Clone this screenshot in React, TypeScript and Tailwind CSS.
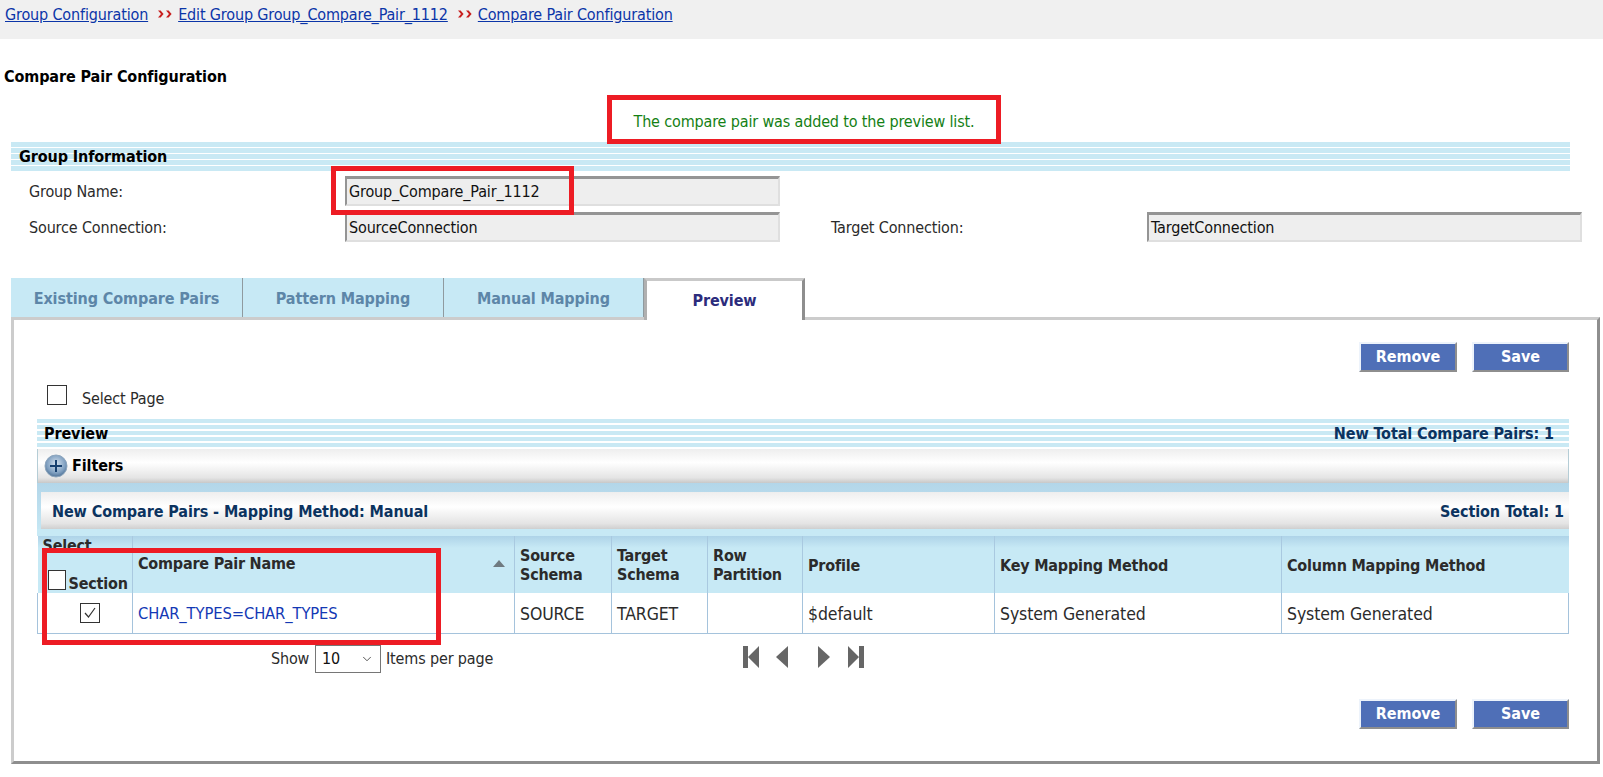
import React from 'react';
import { ChevronDown } from 'lucide-react';

const font = 'font-["DejaVu_Sans_Condensed","Noto_Sans",sans-serif] tracking-[-0.1px]';
const plain = 'text-[16px] tracking-[-0.15px]';

const Band: React.FC<{ className: string; children: React.ReactNode }> = ({ className, children }) => (
  <div className={`flex items-center justify-between bg-[repeating-linear-gradient(180deg,#c9e9f4_0px,#c9e9f4_4.5px,#ffffff_4.5px,#ffffff_6px)] ${className}`}>
    {children}
  </div>
);

const Btn: React.FC<{ label: string; width: string }> = ({ label, width }) => (
  <button className={`h-[30px] border-2 border-t-[#edf3fb] border-l-[#edf3fb] border-r-[#8e8e8e] border-b-[#8e8e8e] bg-[#4f6fb7] text-[16px] font-bold text-white ${width}`}>
    {label}
  </button>
);

const Field: React.FC<{ value: string }> = ({ value }) => (
  <div className={`flex h-[30px] w-[435px] items-center border-2 border-t-[3px] border-t-[#949494] border-l-[#949494] border-r-[#dfdfdf] border-b-[#dfdfdf] bg-[#eeeeee] pl-[2px] pt-[1px] text-[#111] ${plain}`}>
    {value}
  </div>
);

const Crumb: React.FC<{ children: React.ReactNode }> = ({ children }) => (
  <a className={`text-[#0b35a8] underline ${plain}`}>{children}</a>
);

const CrumbSep = () => (
  <svg width="15" height="10" viewBox="0 0 15 10" className="ml-[10px] mr-[5px] mt-[6px]">
    <path d="M0 1.5h2.6l3 3.5-3 3.5H0l3-3.5z" fill="#c8201f" />
    <path d="M8 1.5h2.6l3 3.5-3 3.5H8l3-3.5z" fill="#c8201f" />
  </svg>
);

const PlusIcon = () => (
  <svg width="24" height="24" viewBox="0 0 24 24" className="-ml-[1px]">
    <defs>
      <radialGradient id="plusFill" cx="50%" cy="40%" r="60%">
        <stop offset="0%" stopColor="#d6e3ef" />
        <stop offset="70%" stopColor="#7f9fc0" />
        <stop offset="100%" stopColor="#4e7196" />
      </radialGradient>
    </defs>
    <circle cx="12" cy="12" r="11" fill="url(#plusFill)" stroke="#8ea6bd" />
    <path d="M6 12h12M12 6v12" stroke="#17406f" strokeWidth="2" />
  </svg>
);

const PagerIcon: React.FC<{ d: string; w: number }> = ({ d, w }) => (
  <svg width={w} height="22" viewBox={`0 0 ${w} 22`} className="blur-[0.5px]">
    <path d={d} fill="#666" />
  </svg>
);

const headCell = 'border-r border-[#a9c9e0] px-[5px] align-middle text-left text-[16px] font-bold leading-[19px] tracking-[-0.2px] text-[#2b2b2b]';
const bodyCell = 'border-r border-b border-[#a5c3dc] px-[5px] pt-[3px] text-[17.5px] tracking-[-0.1px] text-[#2b2b2b]';

const Redbox: React.FC<{ className: string }> = ({ className }) => (
  <div className={`pointer-events-none absolute z-20 border-[5px] border-[#ed1c24] ${className}`} />
);

export default function App() {
  return (
    <div className={`relative h-[777px] w-[1603px] overflow-hidden bg-white ${font}`}>
      <div className="flex h-[39px] items-start bg-[#f0f0f0] pl-[5px] pt-[3px]">
        <Crumb>Group Configuration</Crumb>
        <CrumbSep />
        <Crumb>Edit Group Group_Compare_Pair_1112</Crumb>
        <CrumbSep />
        <Crumb>Compare Pair Configuration</Crumb>
      </div>

      <h1 className="ml-[4px] mt-[28px] h-[20px] text-[16px] font-bold leading-[20px] text-black">Compare Pair Configuration</h1>
      <p className={`mt-[25px] h-[20px] pl-[5px] text-center leading-[20px] text-[#148014] ${plain}`}>
        The compare pair was added to the preview list.
      </p>

      <Band className="ml-[11px] mt-[10px] h-[29px] w-[1559px] pl-[8px]">
        <span className="text-[16px] font-bold text-black">Group Information</span>
      </Band>

      <div className={`mt-[5px] flex flex-col gap-[6px] pl-[29px] text-[#2b2b2b] ${plain}`}>
        <div className="flex items-center">
          <span className="w-[316px] pt-[1px]">Group Name:</span>
          <Field value="Group_Compare_Pair_1112" />
        </div>
        <div className="flex items-center">
          <span className="w-[316px] pt-[2px]">Source Connection:</span>
          <Field value="SourceConnection" />
          <span className="ml-[51px] w-[316px] pt-[2px]">Target Connection:</span>
          <Field value="TargetConnection" />
        </div>
      </div>

      <div className="relative z-10 ml-[11px] mt-[33px] flex h-[42px] items-end">
        {[
          ['Existing Compare Pairs', 'w-[232px]'],
          ['Pattern Mapping', 'w-[201px]'],
          ['Manual Mapping', 'w-[200px]'],
        ].map(([label, w]) => (
          <div key={label} className={`flex h-[39px] items-center justify-center border-r border-[#8f9a9f] bg-[#c7e9f5] pt-[2px] text-[16px] font-bold text-[#5d86a8] ${w}`}>
            {label}
          </div>
        ))}
        <div className="-mb-[3px] flex h-[42px] w-[161px] items-center justify-center border-x-[3px] border-t-[3px] border-r-[#8e8e8e] border-t-[#c9c9c9] border-l-[#b0b0b0] bg-white text-[16px] font-bold text-[#2c2c7c]">
          Preview
        </div>
      </div>

      <div className="ml-[11px] flex h-[447px] w-[1589px] flex-col border-[3px] border-t-[#cccccc] border-l-[#cccccc] border-r-[#8e8e8e] border-b-[#8e8e8e] pl-[23px] pr-[28px] pt-[22px]">
        <div className="flex justify-end gap-[15px]">
          <Btn label="Remove" width="w-[98px]" />
          <Btn label="Save" width="w-[97px]" />
        </div>

        <div className={`ml-[10px] mt-[14px] flex h-[20px] items-center gap-[15px] text-[#2b2b2b] ${plain}`}>
          <div className="size-[20px] -translate-y-[1px] border border-[#333]" />
          <span className="mt-[6px]">Select Page</span>
        </div>

        <Band className="mt-[13px] h-[29px] pl-[7px] pr-[15px] text-[16px] font-bold">
          <span className="text-black">Preview</span>
          <span className="text-[#0b335f]">New Total Compare Pairs: 1</span>
        </Band>

        <div className="mt-[1px] flex h-[34px] items-center gap-[4px] border-x border-[#b5cdd6] bg-[linear-gradient(180deg,#eeeeee_0%,#ffffff_40%,#e4e4e4_85%,#c8c8c8_100%)] pl-[7px] text-[16px] font-bold text-black">
          <PlusIcon />
          <span>Filters</span>
        </div>

        <div className="bg-[linear-gradient(180deg,#b3d6e9_0%,#c7e9f5_100%)] pt-[9px]">
          <div className="ml-[4px] flex h-[37px] items-center justify-between bg-[linear-gradient(180deg,#eeeeee_0%,#ffffff_40%,#e4e4e4_85%,#cfcfcf_100%)] pl-[11px] pr-[5px] pt-[2px] text-[16px] font-bold text-[#0b335f]">
            <span>New Compare Pairs - Mapping Method: Manual</span>
            <span>Section Total: 1</span>
          </div>
          <div className="h-[7px] bg-[#c7e9f5]" />
        </div>

        <table className="w-full table-fixed border-collapse">
          <colgroup>
            <col className="w-[95px]" />
            <col className="w-[382px]" />
            <col className="w-[97px]" />
            <col className="w-[96px]" />
            <col className="w-[95px]" />
            <col className="w-[192px]" />
            <col className="w-[287px]" />
            <col />
          </colgroup>
          <thead>
            <tr className="h-[57px] bg-[linear-gradient(180deg,#aed3e8_0px,#c7e9f5_12px,#c7e9f5_100%)]">
              <th className={`${headCell} overflow-hidden !px-0`}>
                <div className="relative h-[57px] overflow-hidden">
                  <span className="absolute left-[5px] top-[0px]">Select</span>
                  <div className="absolute bottom-[3px] left-[10px] h-[20px] w-[18px] border border-[#333] bg-white" />
                  <span className="absolute bottom-[0px] left-[31px]">Section</span>
                </div>
              </th>
              <th className={headCell}>
                <div className="-mt-[2px] flex items-center justify-between pr-[4px]">
                  <span>Compare Pair Name</span>
                  <svg width="12" height="7" viewBox="0 0 12 7"><path d="M6 0l6 7H0z" fill="#6f7a80" /></svg>
                </div>
              </th>
              <th className={headCell}>Source<br />Schema</th>
              <th className={headCell}>Target<br />Schema</th>
              <th className={headCell}>Row<br />Partition</th>
              <th className={`${headCell} pt-[2px]`}>Profile</th>
              <th className={`${headCell} pt-[2px]`}>Key Mapping Method</th>
              <th className={`${headCell} !border-r-0 pt-[2px]`}>Column Mapping Method</th>
            </tr>
          </thead>
          <tbody>
            <tr className="h-[40px]">
              <td className={`${bodyCell} border-l !pt-0`}>
                <div className="ml-[37px] flex size-[20px] items-center justify-center border border-[#333]">
                  <svg width="16" height="16" viewBox="0 0 16 16" fill="none"><path d="M3 8l3.5 4L13 3" stroke="#333" strokeWidth="1.2" /></svg>
                </div>
              </td>
              <td className={`${bodyCell} !text-[16.4px] !text-[#1338b4]`}>CHAR_TYPES=CHAR_TYPES</td>
              <td className={bodyCell}>SOURCE</td>
              <td className={bodyCell}>TARGET</td>
              <td className={bodyCell} />
              <td className={bodyCell}>$default</td>
              <td className={bodyCell}>System Generated</td>
              <td className={bodyCell}>System Generated</td>
            </tr>
          </tbody>
        </table>

        <div className={`flex h-[38px] items-start text-[#2b2b2b] ${plain}`}>
          <div className="ml-[234px] flex w-[472px] items-center pt-[11px]">
            <span className="w-[44px]">Show</span>
            <div className="flex h-[28px] w-[66px] items-center justify-between border border-[#767676] bg-white px-[6px] text-[#111]">
              <span>10</span>
              <ChevronDown size={14} strokeWidth={1.2} />
            </div>
            <span className="ml-[5px]">Items per page</span>
          </div>
          <div className="mt-[12px] flex items-center">
            <PagerIcon w={16} d="M0 0h5v22H0zM16 0v22L5 11z" />
            <div className="w-[17px]" />
            <PagerIcon w={12} d="M12 0v22L0 11z" />
            <div className="w-[30px]" />
            <PagerIcon w={12} d="M0 0v22l12-11z" />
            <div className="w-[18px]" />
            <PagerIcon w={16} d="M0 0v22l11-11zM11 0h5v22h-5z" />
          </div>
        </div>

        <div className="mt-[27px] flex justify-end gap-[15px]">
          <Btn label="Remove" width="w-[98px]" />
          <Btn label="Save" width="w-[97px]" />
        </div>
      </div>

      <Redbox className="left-[607px] top-[95px] h-[49px] w-[394px]" />
      <Redbox className="left-[331px] top-[166px] h-[49px] w-[243px]" />
      <Redbox className="left-[42px] top-[548px] h-[97px] w-[399px]" />
    </div>
  );
}
